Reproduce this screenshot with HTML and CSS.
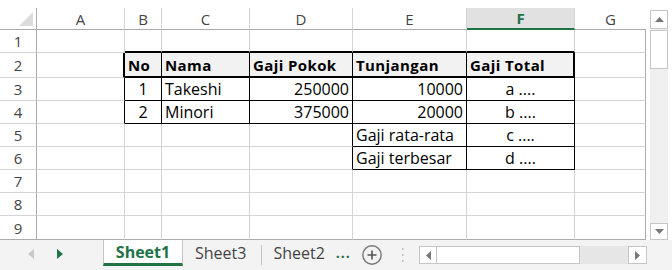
FILE: index.html
```html
<!doctype html>
<html>
    <head>
        <meta charset="utf-8" />
        <title>Gaji</title>
        <link rel="stylesheet" href="styles.css">
    </head>
    <body>
        <div class="app">
            <div class="main">
                <div class="sheet">
                    <div class="ch corner"><svg width="14" height="14" viewBox="0 0 14 14"><polygon points="14,0 14,14 0,14" fill="#dcdcdc" /></svg></div>
                    <div class="ch">A</div>
                    <div class="ch">B</div>
                    <div class="ch">C</div>
                    <div class="ch">D</div>
                    <div class="ch">E</div>
                    <div class="ch sel">F</div>
                    <div class="ch last">G</div>

                    <div class="rh">1</div>
                    <div class="c"></div>
                    <div class="c tb"></div>
                    <div class="c tb"></div>
                    <div class="c tb"></div>
                    <div class="c tb"></div>
                    <div class="c tb"></div>
                    <div class="c g"></div>

                    <div class="rh">2</div>
                    <div class="c lb2"></div>
                    <div class="c h">No</div>
                    <div class="c h">Nama</div>
                    <div class="c h">Gaji Pokok</div>
                    <div class="c h">Tunjangan</div>
                    <div class="c h last">Gaji Total</div>
                    <div class="c g"></div>

                    <div class="rh">3</div>
                    <div class="c lb"></div>
                    <div class="c t mid">1</div>
                    <div class="c t">Takeshi</div>
                    <div class="c t num">250000</div>
                    <div class="c t num">10000</div>
                    <div class="c t mid">a ....</div>
                    <div class="c g"></div>

                    <div class="rh">4</div>
                    <div class="c lb"></div>
                    <div class="c t mid">2</div>
                    <div class="c t">Minori</div>
                    <div class="c t num">375000</div>
                    <div class="c t num">20000</div>
                    <div class="c t mid">b ....</div>
                    <div class="c g"></div>

                    <div class="rh">5</div>
                    <div class="c"></div>
                    <div class="c"></div>
                    <div class="c"></div>
                    <div class="c lb"></div>
                    <div class="c t">Gaji rata-rata</div>
                    <div class="c t mid">c ....</div>
                    <div class="c g"></div>

                    <div class="rh">6</div>
                    <div class="c"></div>
                    <div class="c"></div>
                    <div class="c"></div>
                    <div class="c lb"></div>
                    <div class="c t">Gaji terbesar</div>
                    <div class="c t mid">d ....</div>
                    <div class="c g"></div>

                    <div class="rh">7</div>
                    <div class="c"></div>
                    <div class="c"></div>
                    <div class="c"></div>
                    <div class="c"></div>
                    <div class="c"></div>
                    <div class="c"></div>
                    <div class="c g"></div>

                    <div class="rh">8</div>
                    <div class="c"></div>
                    <div class="c"></div>
                    <div class="c"></div>
                    <div class="c"></div>
                    <div class="c"></div>
                    <div class="c"></div>
                    <div class="c g"></div>

                    <div class="rh end">9</div>
                    <div class="c end"></div>
                    <div class="c end"></div>
                    <div class="c end"></div>
                    <div class="c end"></div>
                    <div class="c end"></div>
                    <div class="c end"></div>
                    <div class="c g end"></div>
                </div>
                <div class="vscroll">
                    <div class="vtrack">
                        <div class="vbtn"><svg width="9" height="5" viewBox="0 0 9 5"><polygon points="0,5 9,5 4.5,0" fill="#777" /></svg></div>
                        <div class="vthumb"></div>
                        <div class="vfill"></div>
                        <div class="vbtn down"><svg width="9" height="5" viewBox="0 0 9 5"><polygon points="0,0 9,0 4.5,5" fill="#777" /></svg></div>
                    </div>
                </div>
            </div>
            <div class="tabs">
                <div class="nav">
                    <svg class="prev" width="6" height="10" viewBox="0 0 6 10"><polygon points="6,0 6,10 0,5" fill="#c8c8c8" /></svg>
                    <svg class="next" width="6" height="10" viewBox="0 0 6 10"><polygon points="0,0 0,10 6,5" fill="#217346" /></svg>
                </div>
                <div class="tab active">Sheet1</div>
                <div class="tab">Sheet3</div>
                <div class="sep"></div>
                <div class="tab second">Sheet2</div>
                <div class="more">...</div>
                <svg class="add" width="22" height="22" viewBox="0 0 22 22">
                    <circle cx="11" cy="11" r="9.2" fill="none" stroke="#777" stroke-width="1.4" />
                    <path d="M11 6.5v9M6.5 11h9" stroke="#555" stroke-width="1.6" />
                </svg>
                <svg class="grip" width="3" height="16" viewBox="0 0 3 16">
                    <rect x="1" y="1" width="1.5" height="2" fill="#c0c0c0" />
                    <rect x="1" y="7" width="1.5" height="2" fill="#c0c0c0" />
                    <rect x="1" y="13" width="1.5" height="2" fill="#c0c0c0" />
                </svg>
                <div class="hscroll">
                    <div class="hbtn"><svg width="5" height="9" viewBox="0 0 5 9"><polygon points="5,0 5,9 0,4.5" fill="#777" /></svg></div>
                    <div class="hthumb"></div>
                    <div class="hfill"></div>
                    <div class="hbtn right"><svg width="5" height="9" viewBox="0 0 5 9"><polygon points="0,0 0,9 5,4.5" fill="#777" /></svg></div>
                </div>
            </div>
        </div>
    </body>
</html>
```

FILE: styles.css
```css
html, body {
    margin: 0px;
    padding: 0px;
    background: #fff;
}

body {
    font-family: "Open Sans", "DejaVu Sans", sans-serif;
}

.app {
    width: 672px;
    height: 270px;
    display: flex;
    flex-direction: column;
    overflow: hidden;
}

.main {
    display: flex;
    height: 240px;
}

.sheet {
    margin-top: 8px;
    display: grid;
    grid-template-columns: 37px 88px 37px 88px 103px 114px 108px 71px;
    grid-template-rows: 22px 23px 25px repeat(6, 23px) 24px;
    font-size: 16px;
}

.sheet > div {
    box-sizing: border-box;
    border-right: 1px solid #d4d4d4;
    border-bottom: 1px solid #d4d4d4;
    display: flex;
    align-items: center;
    padding: 0 3px;
    white-space: nowrap;
    overflow: hidden;
    color: #000;
}

/* headers */
.sheet .ch {
    justify-content: center;
    color: #444;
    font-size: 15px;
    border-bottom-color: #ababab;
}

.sheet .ch.sel {
    background: #e1e1e1;
    color: #217346;
    font-weight: bold;
    border-bottom: 2px solid #217346;
}

.sheet .ch.last {
    border-right: none;
}

.sheet .corner {
    border-right-color: #ababab;
    justify-content: flex-end;
    align-items: flex-end;
    padding: 0 3px 3px 0;
}

.sheet .rh {
    justify-content: center;
    color: #444;
    font-size: 15px;
    border-right-color: #ababab;
}

.sheet .g {
    border-right-color: #ababab;
}

.sheet .end {
    border-bottom-color: #ababab;
}

/* table borders */
.sheet .tb {
    border-bottom: 2px solid #000;
}

.sheet .lb2 {
    border-right: 2px solid #000;
}

.sheet .lb {
    border-right-color: #000;
}

.sheet .h {
    background: #f2f2f2;
    font-size: 15px;
    font-weight: bold;
    letter-spacing: 0.4px;
    border-right-color: #000;
    border-bottom: 2px solid #000;
}

.sheet .h.last {
    border-right: 2px solid #000;
}

.sheet .t {
    border-right-color: #000;
    border-bottom-color: #000;
}

.sheet .num {
    justify-content: flex-end;
}

.sheet .mid {
    justify-content: center;
}

/* vertical scrollbar */
.vscroll {
    width: 26px;
    display: flex;
    justify-content: center;
    padding-top: 10px;
    box-sizing: border-box;
}

.vtrack {
    width: 18px;
    background: #f0f0f0;
    display: flex;
    flex-direction: column;
}

.vbtn {
    height: 19px;
    background: #fff;
    border: 1px solid #c6c6c6;
    box-sizing: border-box;
    display: flex;
    align-items: center;
    justify-content: center;
}

.vbtn.down {
    height: 17px;
}

.vthumb {
    height: 39px;
    margin-top: 1px;
    background: #fff;
    border: 1px solid #c6c6c6;
    box-sizing: border-box;
}

.vfill {
    flex: 1;
}

/* sheet tabs */
.tabs {
    height: 30px;
    background: #f3f3f3;
    display: flex;
    align-items: flex-start;
    font-size: 16px;
}

.nav {
    width: 103px;
    height: 28px;
    display: flex;
    align-items: center;
    flex-shrink: 0;
}

.nav .prev {
    margin-left: 28px;
}

.nav .next {
    margin-left: 23px;
}

.tab {
    height: 26px;
    display: flex;
    align-items: center;
    padding: 0 12px;
    color: #444;
    box-sizing: border-box;
}

.tab.active {
    width: 80px;
    justify-content: center;
    padding: 0;
    background: #fff;
    border-left: 1px solid #c6c6c6;
    border-right: 1px solid #c6c6c6;
    border-bottom: 3px solid #217346;
    color: #217346;
    font-weight: bold;
}

.tab.second {
    padding: 0 11px 0 11px;
}

.sep {
    width: 1px;
    height: 20px;
    margin: 5px 0 0 3px;
    background: #c6c6c6;
}

.more {
    height: 26px;
    line-height: 26px;
    color: #217346;
    font-size: 14px;
    font-weight: bold;
    letter-spacing: 1px;
}

.add {
    margin: 4px 0 0 10px;
}

.grip {
    margin: 7px 0 0 18px;
}

.hscroll {
    margin: 6px 25px 0 auto;
    width: 228px;
    height: 18px;
    display: flex;
}

.hbtn {
    width: 18px;
    background: #fff;
    border: 1px solid #c6c6c6;
    box-sizing: border-box;
    display: flex;
    align-items: center;
    justify-content: center;
}

.hbtn.right {
    width: 19px;
}

.hthumb {
    width: 143px;
    background: #fff;
    border: 1px solid #c6c6c6;
    border-left: none;
    box-sizing: border-box;
}

.hfill {
    flex: 1;
    background: #e6e6e6;
}
```
